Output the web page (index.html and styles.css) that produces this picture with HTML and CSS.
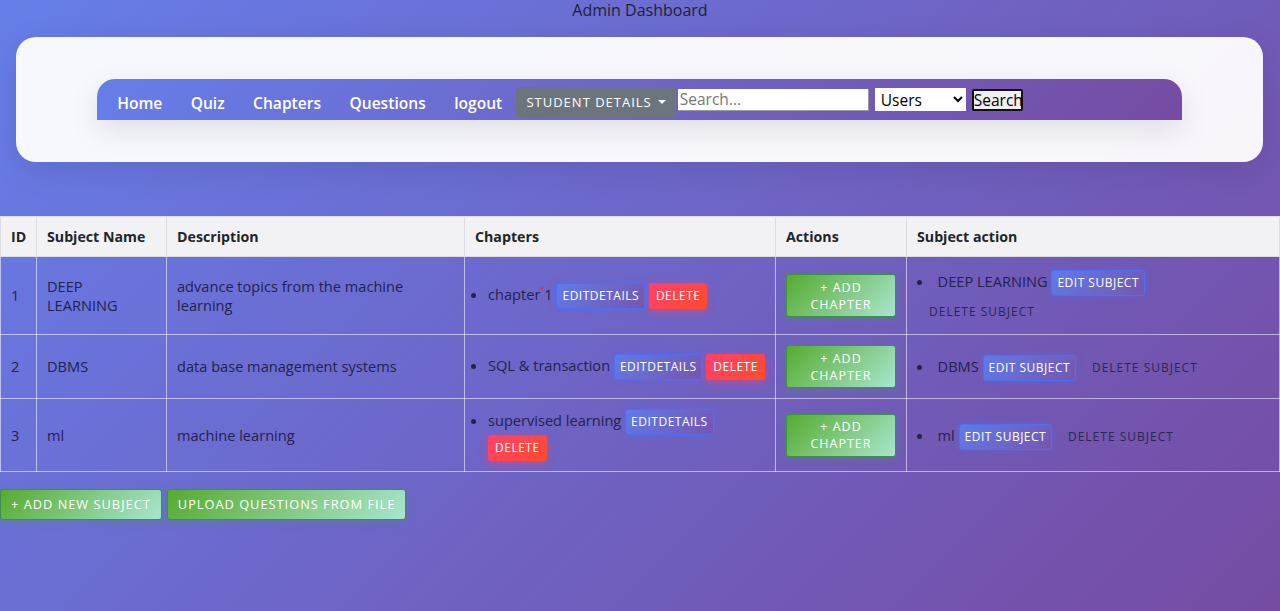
FILE: index.html
```html
<!DOCTYPE html>
<html lang="en">
<head>
<meta charset="utf-8">
<title>Admin Dashboard</title>
<link rel="stylesheet" href="styles.css">
</head>
<body>
<h1 class="page-title">Admin Dashboard</h1>
<div class="nav-card">
  <nav class="navbar">
    <a class="nav-link" href="#">Home</a>
    <a class="nav-link" href="#">Quiz</a>
    <a class="nav-link" href="#">Chapters</a>
    <a class="nav-link" href="#">Questions</a>
    <a class="nav-link" href="#">logout</a>
    <button class="btn-student">Student Details <span class="caret"></span></button>
    <form class="search-form">
      <input class="search-input" type="text" placeholder="Search...">
      <select class="search-select"><option>Users</option></select>
      <button class="search-btn" type="button">Search</button>
    </form>
  </nav>
</div>

<table class="subjects">
  <colgroup>
    <col class="c-id"><col class="c-name"><col class="c-desc"><col class="c-chap"><col class="c-act"><col class="c-sub">
  </colgroup>
  <thead>
    <tr><th>ID</th><th>Subject Name</th><th>Description</th><th>Chapters</th><th>Actions</th><th>Subject action</th></tr>
  </thead>
  <tbody>
    <tr>
      <td>1</td>
      <td>DEEP LEARNING</td>
      <td>advance topics from the machine learning</td>
      <td><ul class="chap-list"><li>chapter<span class="red-dot"></span>1 <button class="btn-edit">EditDetails</button> <button class="btn-del">Delete</button></li></ul></td>
      <td><button class="btn-green btn-addch">+ Add Chapter</button></td>
      <td><ul class="sub-list"><li><span class="sub-name">DEEP LEARNING</span> <button class="btn-edit">Edit Subject</button> <button class="btn-text">Delete Subject</button></li></ul></td>
    </tr>
    <tr>
      <td>2</td>
      <td>DBMS</td>
      <td>data base management systems</td>
      <td><ul class="chap-list"><li>SQL &amp; transaction <button class="btn-edit">EditDetails</button> <button class="btn-del">Delete</button></li></ul></td>
      <td><button class="btn-green btn-addch">+ Add Chapter</button></td>
      <td><ul class="sub-list"><li><span class="sub-name">DBMS</span> <button class="btn-edit">Edit Subject</button> <button class="btn-text">Delete Subject</button></li></ul></td>
    </tr>
    <tr>
      <td>3</td>
      <td>ml</td>
      <td>machine learning</td>
      <td><ul class="chap-list"><li>supervised learning <button class="btn-edit">EditDetails</button> <button class="btn-del">Delete</button></li></ul></td>
      <td><button class="btn-green btn-addch">+ Add Chapter</button></td>
      <td><ul class="sub-list"><li><span class="sub-name">ml</span> <button class="btn-edit">Edit Subject</button> <button class="btn-text">Delete Subject</button></li></ul></td>
    </tr>
  </tbody>
</table>

<div class="bottom-actions">
  <button class="btn-green btn-wide">+ Add New Subject</button>
  <button class="btn-green btn-wide">Upload Questions from File</button>
</div>
</body>
</html>
```

FILE: styles.css
```css
html, body {
  margin: 0;
  padding: 0;
}
body {
  min-height: 100vh;
  background: linear-gradient(135deg, #667eea 0%, #764ba2 100%);
  font-family: "Open Sans", "Noto Sans", sans-serif;
  color: #23234a;
  font-size: 14.6px;
}
.page-title {
  margin: 0;
  text-align: center;
  font-size: 16px;
  font-weight: 400;
  line-height: 21px;
  color: #1f1f35;
}
.nav-card {
  margin: 16px 17px 0 16px;
  padding: 42px 81px;
  background: rgba(255, 255, 255, 0.95);
  border-radius: 20px;
  box-shadow: 0 8px 32px rgba(0, 0, 0, 0.1);
}
.navbar {
  display: flex;
  align-items: center;
  height: 41px;
  padding-left: 6px;
  background: linear-gradient(135deg, #667eea 0%, #764ba2 100%);
  border-radius: 18px 18px 0 0;
  box-shadow: 0 10px 30px rgba(0, 0, 0, 0.1);
}
.nav-link {
  color: #fff;
  text-decoration: none;
  font-size: 15.6px;
  font-weight: 600;
  padding: 0 14.2px;
  margin-top: 7px;
}
.btn-student {
  margin-top: 5px;
  height: 31px;
  padding: 0 10px;
  background: #6c757d;
  color: #fff;
  border: none;
  border-radius: 4px;
  font-family: inherit;
  font-size: 13px;
  letter-spacing: 1px;
  text-transform: uppercase;
  display: flex;
  align-items: center;
  gap: 6px;
}
.caret {
  display: inline-block;
  width: 0;
  height: 0;
  border-left: 4px solid transparent;
  border-right: 4px solid transparent;
  border-top: 4px solid #fff;
}
.search-form {
  display: flex;
  align-items: center;
  margin-left: 2px;
}
.search-input {
  width: 191px;
  height: 22px;
  box-sizing: border-box;
  border: 1px solid #9a9a9a;
  border-top: none;
  border-left: none;
  padding: 0 2px;
  font-family: inherit;
  font-size: 15.5px;
  background: #fff;
}
.search-input::placeholder {
  color: #777;
}
.search-select {
  margin-left: 6px;
  width: 91px;
  height: 23px;
  border: none;
  border-radius: 0;
  font-family: inherit;
  font-size: 15.5px;
  background: #fff;
  color: #000;
  padding: 0 2px;
}
.search-btn {
  margin-left: 6px;
  height: 22px;
  width: 51px;
  padding: 0;
  box-sizing: border-box;
  border: 2px solid #111;
  border-radius: 2px;
  background: #efefef;
  font-family: inherit;
  font-size: 15.5px;
  line-height: 16px;
  color: #000;
}

.subjects {
  width: 100%;
  margin-top: 54px;
  border-collapse: collapse;
  table-layout: fixed;
}
.c-id { width: 36px; }
.c-name { width: 130px; }
.c-desc { width: 298px; }
.c-chap { width: 311px; }
.c-act { width: 131px; }
.c-sub { width: auto; }
.subjects th,
.subjects td {
  border: 1px solid rgba(255, 255, 255, 0.55);
  padding: 10px 10px;
  text-align: left;
  vertical-align: middle;
}
.subjects th {
  background: #f2f2f4;
  color: #212529;
  font-weight: 700;
  font-size: 14.2px;
  line-height: 19px;
  border-color: #dcdce0;
}
.subjects td {
  line-height: 19px;
  color: #23234a;
}
.chap-list,
.sub-list {
  margin: 0;
  padding: 0;
}
.chap-list {
  padding-left: 13px;
}
.sub-list {
  list-style-position: inside;
}
.chap-list li {
  line-height: 22px;
}
.sub-list li {
  line-height: 28px;
}
.red-dot {
  display: inline-block;
  width: 3px;
  height: 3px;
  border-radius: 50%;
  background: #e03040;
  vertical-align: 10px;
  margin: 0 1px 0 0;
}
.btn-edit,
.btn-del,
.btn-text,
.btn-green {
  font-family: inherit;
  font-size: 12px;
  text-transform: uppercase;
  letter-spacing: 0.5px;
  border-radius: 3px;
  cursor: pointer;
}
.btn-edit,
.btn-del,
.btn-text {
  vertical-align: middle;
}
.btn-edit {
  padding: 3px 5px;
  line-height: 18px;
  color: #fff;
  border: 1px solid #4f6ef0;
  background: linear-gradient(135deg, #5f7be9 0%, #7556b0 100%);
  box-shadow: 0 0 6px rgba(70, 110, 255, 0.45);
}
.btn-del {
  padding: 4px 7px;
  line-height: 18px;
  color: #fff;
  border: none;
  background: linear-gradient(135deg, #ff416c 0%, #ff4b2b 100%);
  box-shadow: 0 3px 8px rgba(255, 65, 108, 0.45);
}
.btn-text {
  padding: 3px 12px;
  line-height: 18px;
  color: #2a2850;
  border: none;
  background: transparent;
  letter-spacing: 1px;
}
.btn-green {
  color: #fff;
  border: 1px solid #3f8f4a;
  background: linear-gradient(135deg, #56ab2f 0%, #a8e6cf 100%);
  box-shadow: 0 2px 8px rgba(60, 160, 80, 0.35);
  letter-spacing: 1px;
}
.btn-addch {
  width: 110px;
  padding: 3.5px 8px;
  line-height: 17px;
  font-size: 12.5px;
}
.bottom-actions {
  display: flex;
  gap: 5px;
  margin-top: 17px;
}
.btn-wide {
  height: 31px;
  padding: 0 10px;
  font-size: 12.8px;
  line-height: 29px;
}
```
